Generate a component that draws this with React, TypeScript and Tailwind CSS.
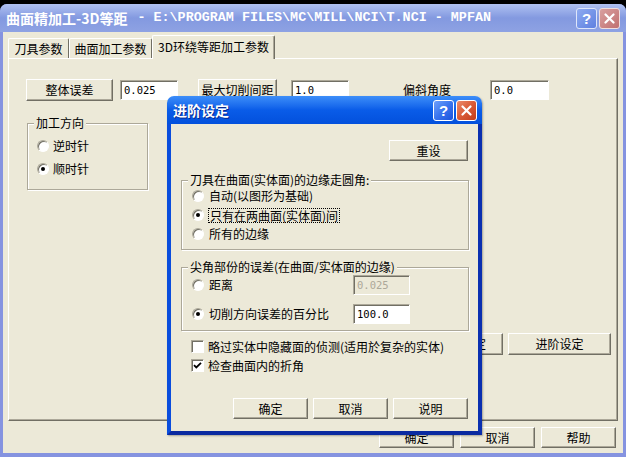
import type { ReactNode } from 'react'

// classic 3D button on the beige dialog face
function Btn({ children, className = '' }: { children: ReactNode; className?: string }) {
  return (
    <div
      className={`flex items-center justify-center bg-[#ece9d8] border border-t-white border-l-white border-r-[#716f64] border-b-[#716f64] shadow-[inset_-1px_-1px_0_#aca899] text-black shrink-0 ${className}`}
    >
      {children}
    </div>
  )
}

function Field({ value, className = '', disabled = false }: { value: string; className?: string; disabled?: boolean }) {
  return (
    <div
      className={`h-[20px] shrink-0 flex items-center pl-[3px] border border-t-[#aca899] border-l-[#aca899] border-r-white border-b-white shadow-[inset_1px_1px_0_#716f64] font-['DejaVu_Sans_Mono',monospace] text-[10.5px] ${
        disabled ? 'bg-[#ece9d8] text-[#aca899]' : 'bg-white text-black'
      } ${className}`}
    >
      {value}
    </div>
  )
}

function Radio({ checked = false }: { checked?: boolean }) {
  return (
    <span className="w-[12px] h-[12px] shrink-0 rounded-full bg-white border border-t-[#aca899] border-l-[#aca899] border-r-white border-b-white shadow-[inset_1px_1px_0_#716f64] flex items-center justify-center">
      {checked && <span className="w-[4px] h-[4px] rounded-full bg-black" />}
    </span>
  )
}

function Check({ checked = false }: { checked?: boolean }) {
  return (
    <span className="w-[13px] h-[13px] shrink-0 bg-white border border-t-[#aca899] border-l-[#aca899] border-r-white border-b-white shadow-[inset_1px_1px_0_#716f64] flex items-center justify-center">
      {checked && (
        <svg width="9" height="9" viewBox="0 0 9 9">
          <path d="M1 4.2 L3.3 6.5 L8 1.8" fill="none" stroke="#000" strokeWidth="1.8" />
        </svg>
      )}
    </span>
  )
}

function Group({ title, className = '', children }: { title: string; className?: string; children: ReactNode }) {
  return (
    <div className={`relative shrink-0 border border-[#aca899] shadow-[inset_1px_1px_0_#fff,1px_1px_0_#fff] ${className}`}>
      <span className="absolute -top-[8px] left-[6px] px-[2px] bg-[#ece9d8] leading-[14px] whitespace-nowrap">{title}</span>
      {children}
    </div>
  )
}

function CaptionButtons({ active }: { active: boolean }) {
  return (
    <div className="flex gap-[2px]">
      <div
        className={
          active
            ? 'w-[21px] h-[21px] rounded-[3px] border border-white bg-gradient-to-br from-[#6ea0fb] via-[#3a74ee] to-[#1c52dc] flex items-center justify-center'
            : 'w-[21px] h-[21px] rounded-[3px] border border-[#dfe6fa] bg-gradient-to-br from-[#8eaaf0] to-[#5f80e0] flex items-center justify-center'
        }
      >
        <span className="text-white font-bold text-[15px] leading-none font-['Liberation_Sans',sans-serif]">?</span>
      </div>
      <div
        className={
          active
            ? 'w-[21px] h-[21px] rounded-[3px] border border-white bg-gradient-to-br from-[#eb8c6c] via-[#d95a36] to-[#c23c1a] flex items-center justify-center'
            : 'w-[21px] h-[21px] rounded-[3px] border border-[#f0dede] bg-gradient-to-br from-[#d9a0a0] to-[#c07070] flex items-center justify-center'
        }
      >
        <svg width="11" height="11" viewBox="0 0 11 11">
          <path d="M1.5 1.5 L9.5 9.5 M9.5 1.5 L1.5 9.5" stroke="#fff" strokeWidth="2.2" strokeLinecap="round" />
        </svg>
      </div>
    </div>
  )
}

function AdvancedDialog() {
  return (
    <div className="absolute left-[167px] top-[96px] w-[315px] h-[339px] flex flex-col rounded-t-[7px] overflow-hidden shadow-[1px_1px_2px_rgba(0,0,0,0.3)]">
      <div className="h-[28px] shrink-0 flex items-center pl-[6px] pr-[5px] bg-gradient-to-b from-[#3d8ef9] via-[#0a5ce8] to-[#0350dc]">
        <span className="flex-1 text-white font-bold text-[14px] [text-shadow:1px_1px_0_#0a2a90]">进阶设定</span>
        <CaptionButtons active />
      </div>
      <div className="flex-1 flex flex-col bg-[#ece9d8] border-l-4 border-r-4 border-b-4 border-l-[#0a4ddd] border-r-[#0a2fb0] border-b-[#0a2aa0]">
        <Btn className="mt-[16px] ml-[218px] w-[79px] h-[21px]">重设</Btn>

        <Group title="刀具在曲面(实体面)的边缘走圆角:" className="mt-[19px] ml-[10px] w-[288px] h-[70px]">
          <div className="pt-[8px] pl-[10px] flex flex-col gap-[5px]">
            <div className="h-[14px] flex items-center gap-[5px]">
              <Radio />
              <span>自动(以图形为基础)</span>
            </div>
            <div className="h-[14px] flex items-center gap-[4px]">
              <Radio checked />
              <span className="border border-dotted border-black px-[1px] leading-[13px]">只有在两曲面(实体面)间</span>
            </div>
            <div className="h-[14px] flex items-center gap-[5px]">
              <Radio />
              <span>所有的边缘</span>
            </div>
          </div>
        </Group>

        <Group title="尖角部份的误差(在曲面/实体面的边缘)" className="mt-[17px] ml-[10px] w-[288px] h-[64px]">
          <div className="pt-[7px] pl-[10px] flex flex-col gap-[9px]">
            <div className="h-[20px] flex items-center">
              <Radio />
              <span className="ml-[5px] w-[144px]">距离</span>
              <Field disabled value="0.025" className="w-[57px]" />
            </div>
            <div className="h-[20px] flex items-center">
              <Radio checked />
              <span className="ml-[5px] w-[144px]">切削方向误差的百分比</span>
              <Field value="100.0" className="w-[57px]" />
            </div>
          </div>
        </Group>

        <div className="mt-[9px] ml-[20px] flex flex-col gap-[6px]">
          <div className="h-[13px] flex items-center gap-[4px]">
            <Check />
            <span>略过实体中隐藏面的侦测(适用於复杂的实体)</span>
          </div>
          <div className="h-[13px] flex items-center gap-[4px]">
            <Check checked />
            <span>检查曲面内的折角</span>
          </div>
        </div>

        <div className="mt-auto mb-[12px] pr-[10px] flex justify-end gap-[5px]">
          <Btn className="w-[75px] h-[21px]">确定</Btn>
          <Btn className="w-[75px] h-[21px]">取消</Btn>
          <Btn className="w-[75px] h-[21px]">说明</Btn>
        </div>
      </div>
    </div>
  )
}

export default function App() {
  return (
    <div className="relative w-[626px] h-[457px] overflow-hidden bg-black text-[12px] leading-[14px] text-black font-['Noto_Sans_CJK_SC',sans-serif]">
      <div className="mt-[4px] h-[453px] flex flex-col rounded-t-[7px] overflow-hidden bg-[#8593e0]">
        {/* inactive caption */}
        <div className="h-[28px] shrink-0 flex items-center pl-[6px] pr-[6px] bg-gradient-to-b from-[#b0c1f1] via-[#8399e0] to-[#8ea2e3]">
          <div className="flex-1 flex items-center whitespace-nowrap text-white font-bold">
            <span className="text-[14px]">曲面精加工-3D等距</span>
            <span className="ml-[10px] font-['Liberation_Mono',monospace] text-[13.4px]">{'- E:\\PROGRAM FILES\\MC\\MILL\\NCI\\T.NCI - MPFAN'}</span>
          </div>
          <CaptionButtons active={false} />
        </div>

        <div className="flex-1 mx-[3px] mb-[4px] bg-[#ece9d8] flex flex-col">
          {/* tab strip */}
          <div className="h-[26px] shrink-0 flex items-end pl-[5px]">
            <div className="w-[61px] h-[20px] flex items-center justify-center border-t border-l border-r border-t-white border-l-white border-r-[#716f64] rounded-t-[2px]">
              刀具参数
            </div>
            <div className="w-[83px] h-[20px] flex items-center justify-center border-t border-l border-r border-t-white border-l-white border-r-[#716f64] rounded-t-[2px]">
              曲面加工参数
            </div>
            <div className="relative z-10 -mb-[1px] w-[123px] h-[24px] pb-[2px] flex items-center justify-center bg-[#ece9d8] border-t border-l border-r border-t-white border-l-white border-r-[#716f64] shadow-[inset_-1px_0_0_#aca899] rounded-t-[2px]">
              3D环绕等距加工参数
            </div>
          </div>

          {/* tab page */}
          <div className="ml-[5px] w-[610px] h-[363px] shrink-0 flex flex-col border border-t-white border-l-white border-r-[#716f64] border-b-[#716f64] shadow-[inset_-1px_-1px_0_#aca899]">
            <div className="mt-[20px] ml-[17px] h-[22px] flex items-center">
              <Btn className="w-[87px] h-[22px]">整体误差</Btn>
              <Field value="0.025" className="ml-[7px] w-[58px]" />
              <Btn className="ml-[20px] w-[79px] h-[22px]">最大切削间距</Btn>
              <Field value="1.0" className="ml-[14px] w-[58px]" />
              <span className="ml-[54px] w-[48px] shrink-0">偏斜角度</span>
              <Field value="0.0" className="ml-[39px] w-[59px]" />
            </div>

            <Group title="加工方向" className="mt-[22px] ml-[18px] w-[121px] h-[67px]">
              <div className="pt-[15px] pl-[9px] flex flex-col gap-[9px]">
                <div className="h-[14px] flex items-center gap-[4px]">
                  <Radio />
                  <span>逆时针</span>
                </div>
                <div className="h-[14px] flex items-center gap-[4px]">
                  <Radio checked />
                  <span>顺时针</span>
                </div>
              </div>
            </Group>

            <div className="mt-auto mb-[65px] mr-[6px] flex justify-end gap-[5px]">
              <Btn className="w-[58px] h-[22px]">设定</Btn>
              <Btn className="w-[103px] h-[22px]">进阶设定</Btn>
            </div>
          </div>

          <div className="mt-[6px] pr-[7px] flex justify-end gap-[6px]">
            <Btn className="w-[75px] h-[21px]">确定</Btn>
            <Btn className="w-[75px] h-[21px]">取消</Btn>
            <Btn className="w-[75px] h-[21px]">帮助</Btn>
          </div>
        </div>
      </div>

      <AdvancedDialog />
    </div>
  )
}
